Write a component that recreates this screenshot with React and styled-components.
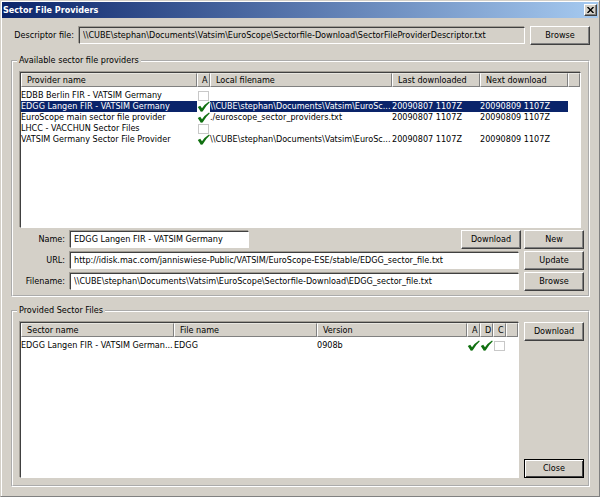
import React from 'react';
import styled, { createGlobalStyle, css } from 'styled-components';

const GlobalStyle = createGlobalStyle`
  * {
    box-sizing: border-box;
  }

  body {
    margin: 0;
    background: #d4d0c8;
  }

  body, button, input, table {
    font-family: "DejaVu Sans Condensed", "DejaVu Sans", sans-serif;
    font-size: 9px;
    line-height: 11px;
    color: #000;
  }
`;

const sunken = css`
  border: 1px solid;
  border-color: #404040 #fff #fff #404040;
  box-shadow: -1px -1px 0 #a09c94;
`;

const Window = styled.div`
  display: flex;
  flex-direction: column;
  min-height: 100vh;
  background: #d4d0c8;
  border: 1px solid;
  border-color: #d4d0c8 #808080 #808080 #d4d0c8;
  box-shadow: inset 1px 1px 0 #fff;
`;

const TitleBar = styled.header`
  display: flex;
  align-items: center;
  justify-content: space-between;
  height: 16px;
  margin: 1px 1px 0;
  padding: 0 1px;
  background: linear-gradient(to right, #0a246a, #a6caf0);
`;

const Title = styled.h1`
  margin: 0;
  font-size: 9px;
  line-height: 11px;
  font-weight: bold;
  color: #fff;
`;

const Button = styled.button`
  flex: none;
  width: 60px;
  height: 19px;
  padding: 0;
  background: #d4d0c8;
  border: 1px solid;
  border-color: #fff #404040 #404040 #fff;
  box-shadow: inset -1px -1px 0 #808080;

  ${({ $primary }) => $primary && css`
    border-color: #000;
    box-shadow: inset 1px 1px 0 #fff, inset -1px -1px 0 #404040;
  `}
`;

const CloseIcon = styled(Button)`
  display: flex;
  align-items: center;
  justify-content: center;
  width: 13px;
  height: 12px;
`;

const Content = styled.main`
  display: flex;
  flex-direction: column;
  flex: 1;
  padding: 8px 9px 9px 10px;
`;

const FieldRow = styled.div`
  display: flex;
  align-items: center;
  gap: 5px;
`;

const DescriptorRow = styled(FieldRow)`
  margin-bottom: 10px;
`;

const Label = styled.label`
  flex: none;
  width: ${({ $width }) => $width}px;
  text-align: right;
  white-space: nowrap;
`;

const Input = styled.input`
  ${sunken}
  flex: ${({ $width }) => ($width ? 'none' : '1')};
  width: ${({ $width }) => ($width ? `${$width}px` : 'auto')};
  min-width: 0;
  height: 17px;
  padding: 0 3px 2px;
  outline: none;
  background: ${({ readOnly }) => (readOnly ? '#d4d0c8' : '#fff')};
`;

const Buttons = styled.div`
  display: flex;
  gap: 3px;
  margin-left: auto;
`;

const Group = styled.fieldset`
  display: flex;
  flex-direction: column;
  flex: ${({ $grow }) => ($grow ? '1' : 'none')};
  min-width: 0;
  margin: 0 0 ${({ $grow }) => ($grow ? 0 : 8)}px;
  padding: 6px 4px 4px 7px;
  border: 2px groove #fff;
`;

const Legend = styled.legend`
  margin-left: -3px;
  padding: 0 2px;
`;

const ListBox = styled.div`
  ${sunken}
  flex: 1;
  min-width: 0;
  min-height: 156px;
  margin-right: ${({ $inset }) => $inset || 0}px;
  background: #fff;
`;

const Table = styled.table`
  width: 100%;
  table-layout: fixed;
  border-collapse: separate;
  border-spacing: 0;

  thead::after {
    content: "";
    display: block;
    height: 3px;
  }
`;

const HeadCell = styled.th`
  width: ${({ $width }) => ($width ? `${$width}px` : 'auto')};
  height: 14px;
  padding: 0 0 0 ${({ $narrow }) => ($narrow ? 4 : 5)}px;
  font-weight: normal;
  text-align: left;
  white-space: nowrap;
  background: #d4d0c8;
  border: 1px solid;
  border-color: #e8e6e0 #808080 #808080 #fff;
`;

const Cell = styled.td`
  height: 11px;
  padding: 0;
  white-space: nowrap;
`;

const Row = styled.tr`
  ${({ $selected }) => $selected && css`
    color: #fff;

    ${Cell}:not(:last-child) {
      background: #0a246a;
    }

    ${Cell}:nth-child(2) {
      background: #fff;
    }
  `}
`;

const Tick = styled.input`
  display: block;
  appearance: none;
  width: 11px;
  height: 10px;
  margin: 0 0 0 1px;
  background: #fff;
  border: 1px solid #c8c8c8;

  &:checked {
    width: 13px;
    height: 11px;
    border: 0;
    margin: 0;
    background: #fff url("data:image/svg+xml,%3Csvg xmlns='http://www.w3.org/2000/svg' viewBox='0 0 13 11'%3E%3Cpath d='M0.8 6L3.2 4.8L5 7.2Q7.8 3 12 0.4L12.8 1.2Q8.6 5 5.6 10.4L3.8 10.7Z' fill='%23107010'/%3E%3C/svg%3E") no-repeat;
  }
`;

const Fields = styled.div`
  display: flex;
  flex-direction: column;
  gap: 2px;
  margin-top: 2px;
`;

const ListRow = styled.div`
  display: flex;
  flex: 1;
  gap: 5px;
`;

const SideButtons = styled.div`
  display: flex;
  flex-direction: column;
  justify-content: space-between;
`;

const providers = [
  { name: 'EDBB Berlin FIR - VATSIM Germany' },
  {
    name: 'EDGG Langen FIR - VATSIM Germany',
    active: true,
    selected: true,
    file: '\\\\CUBE\\stephan\\Documents\\Vatsim\\EuroSc...',
    last: '20090807 1107Z',
    next: '20090809 1107Z',
  },
  {
    name: 'EuroScope main sector file provider',
    active: true,
    file: './euroscope_sector_providers.txt',
    last: '20090807 1107Z',
    next: '20090809 1107Z',
  },
  { name: 'LHCC - VACCHUN Sector Files' },
  {
    name: 'VATSIM Germany Sector File Provider',
    active: true,
    file: '\\\\CUBE\\stephan\\Documents\\Vatsim\\EuroSc...',
    last: '20090807 1107Z',
    next: '20090809 1107Z',
  },
];

function ProviderTable() {
  return (
    <Table>
      <thead>
        <tr>
          <HeadCell $width={176}>Provider name</HeadCell>
          <HeadCell $width={13} $narrow>A</HeadCell>
          <HeadCell>Local filename</HeadCell>
          <HeadCell $width={88}>Last downloaded</HeadCell>
          <HeadCell $width={88}>Next download</HeadCell>
          <HeadCell $width={12} />
        </tr>
      </thead>
      <tbody>
        {providers.map((p) => (
          <Row key={p.name} $selected={p.selected}>
            <Cell>{p.name}</Cell>
            <Cell>
              <Tick type='checkbox' aria-label={`${p.name} active`} defaultChecked={p.active} />
            </Cell>
            <Cell>{p.file}</Cell>
            <Cell>{p.last}</Cell>
            <Cell>{p.next}</Cell>
            <Cell />
          </Row>
        ))}
      </tbody>
    </Table>
  );
}

function SectorTable() {
  return (
    <Table>
      <thead>
        <tr>
          <HeadCell $width={153}>Sector name</HeadCell>
          <HeadCell>File name</HeadCell>
          <HeadCell $width={150}>Version</HeadCell>
          <HeadCell $width={13} $narrow>A</HeadCell>
          <HeadCell $width={13} $narrow>D</HeadCell>
          <HeadCell $width={13} $narrow>C</HeadCell>
          <HeadCell $width={12} />
        </tr>
      </thead>
      <tbody>
        <Row>
          <Cell>EDGG Langen FIR - VATSIM German...</Cell>
          <Cell>EDGG</Cell>
          <Cell>0908b</Cell>
          <Cell><Tick type='checkbox' aria-label='A' defaultChecked /></Cell>
          <Cell><Tick type='checkbox' aria-label='D' defaultChecked /></Cell>
          <Cell><Tick type='checkbox' aria-label='C' /></Cell>
          <Cell />
        </Row>
      </tbody>
    </Table>
  );
}

function App() {
  return (
    <Window>
      <GlobalStyle />
      <TitleBar>
        <Title>Sector File Providers</Title>
        <CloseIcon aria-label='Close window'>
          <svg width='7' height='6' viewBox='0 0 7 6'>
            <path d='M0.5 0L6.5 6M6.5 0L0.5 6' stroke='#000' strokeWidth='1.4' />
          </svg>
        </CloseIcon>
      </TitleBar>

      <Content>
        <DescriptorRow>
          <Label htmlFor='descriptor' $width={63}>Descriptor file:</Label>
          <Input
            id='descriptor'
            readOnly
            value={'\\\\CUBE\\stephan\\Documents\\Vatsim\\EuroScope\\Sectorfile-Download\\SectorFileProviderDescriptor.txt'}
          />
          <Button>Browse</Button>
        </DescriptorRow>

        <Group>
          <Legend>Available sector file providers</Legend>
          <ListBox $inset={3}>
            <ProviderTable />
          </ListBox>
          <Fields>
            <FieldRow>
              <Label htmlFor='name' $width={45}>Name:</Label>
              <Input id='name' $width={179} defaultValue='EDGG Langen FIR - VATSIM Germany' />
              <Buttons>
                <Button>Download</Button>
                <Button>New</Button>
              </Buttons>
            </FieldRow>
            <FieldRow>
              <Label htmlFor='url' $width={45}>URL:</Label>
              <Input
                id='url'
                defaultValue='http://idisk.mac.com/janniswiese-Public/VATSIM/EuroScope-ESE/stable/EDGG_sector_file.txt'
              />
              <Button>Update</Button>
            </FieldRow>
            <FieldRow>
              <Label htmlFor='filename' $width={45}>Filename:</Label>
              <Input
                id='filename'
                defaultValue={'\\\\CUBE\\stephan\\Documents\\Vatsim\\EuroScope\\Sectorfile-Download\\EDGG_sector_file.txt'}
              />
              <Button>Browse</Button>
            </FieldRow>
          </Fields>
        </Group>

        <Group $grow>
          <Legend>Provided Sector Files</Legend>
          <ListRow>
            <ListBox>
              <SectorTable />
            </ListBox>
            <SideButtons>
              <Button>Download</Button>
              <Button $primary>Close</Button>
            </SideButtons>
          </ListRow>
        </Group>
      </Content>
    </Window>
  );
}

export default App;
